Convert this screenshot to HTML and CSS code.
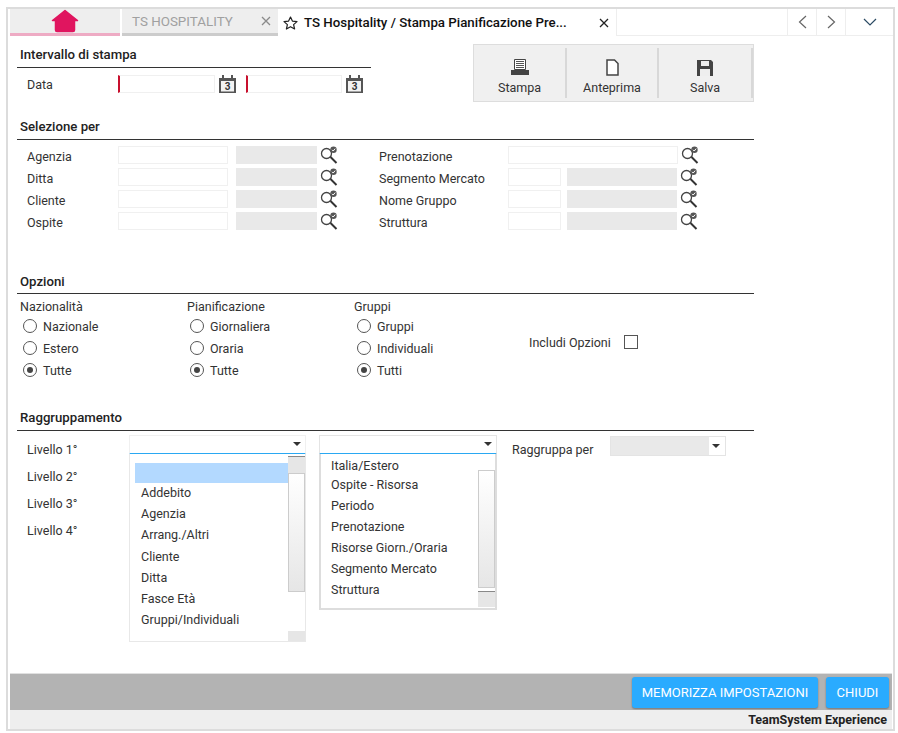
FILE: index.html
```html
<!DOCTYPE html>
<html>
<head>
    <title>TS Hospitality</title>
    <link rel="stylesheet" href="styles.css">
</head>
<body>
    <div class="window">
        <!-- tab bar -->
        <div class="tabbar">
            <div class="tab tab-home">
                <svg width="28" height="24" viewBox="0 0 28 24"><path fill="#e0155f" stroke="#e0155f" stroke-width="1.5" stroke-linejoin="round" d="M14 1.5 L26.5 11.5 H23.5 V21 Q23.5 22.5 22 22.5 H6 Q4.5 22.5 4.500 21 V11.500 H1.500 Z"/></svg>
            </div>
            <div class="tab tab-app">
                <span class="tab-app-title">TS HOSPITALITY</span>
                <svg class="tab-close" width="10" height="10" viewBox="0 0 10 10"><path stroke="#8a8a8a" stroke-width="1.300" d="M1 1 L9 9 M9 1 L1 9"/></svg>
            </div>
            <div class="tab tab-active">
                <svg class="tab-star" width="15" height="14" viewBox="0 0 15 14"><path fill="none" stroke="#222" stroke-width="1.200" stroke-linejoin="round" d="M7.500 1 L9.400 5.100 L14 5.600 L10.600 8.600 L11.600 13 L7.500 10.700 L3.400 13 L4.400 8.600 L1 5.600 L5.600 5.100 Z"/></svg>
                <span class="tab-active-title">TS Hospitality / Stampa Pianificazione Pre...</span>
                <svg class="tab-close" width="10" height="10" viewBox="0 0 10 10"><path stroke="#222" stroke-width="1.300" d="M1 1 L9 9 M9 1 L1 9"/></svg>
            </div>
            <div class="tab-spacer"></div>
            <div class="tab-nav">
                <svg width="9" height="14" viewBox="0 0 9 14"><path fill="none" stroke="#666" stroke-width="1.200" d="M8 1 L1.500 7 L8 13"/></svg>
            </div>
            <div class="tab-nav">
                <svg width="9" height="14" viewBox="0 0 9 14"><path fill="none" stroke="#666" stroke-width="1.200" d="M1 1 L7.500 7 L1 13"/></svg>
            </div>
            <div class="tab-nav tab-nav-wide">
                <svg width="14" height="8" viewBox="0 0 14 8"><path fill="none" stroke="#2b4a63" stroke-width="1.200" d="M1 1 L7 7 L13 1"/></svg>
            </div>
        </div>

        <div class="main">
            <!-- print range + toolbar -->
            <div class="top-row">
                <div class="range">
                    <div class="section-title">Intervallo di stampa</div>
                    <div class="range-row">
                        <span class="field-label">Data</span>
                        <input class="input input-date" type="text">
                        <svg class="cal" width="17" height="18" viewBox="0 0 17 18"><path fill="#555" d="M0 3 H3 V0 H5 V3 H12 V0 H14 V3 H17 V18 H0 Z"/><rect x="2" y="6" width="13" height="10.500" fill="#f2f2f2"/><text x="8.500" y="15" text-anchor="middle" class="cal-num">3</text></svg>
                        <input class="input input-date input-date2" type="text">
                        <svg class="cal" width="17" height="18" viewBox="0 0 17 18"><path fill="#555" d="M0 3 H3 V0 H5 V3 H12 V0 H14 V3 H17 V18 H0 Z"/><rect x="2" y="6" width="13" height="10.500" fill="#f2f2f2"/><text x="8.500" y="15" text-anchor="middle" class="cal-num">3</text></svg>
                    </div>
                </div>
                <div class="toolbar">
                    <div class="tool">
                        <svg width="18" height="17" viewBox="0 0 18 17"><path fill="#fff" stroke="#444" d="M3.500 .5 H14.500 V10.500 H3.500 Z"/><path stroke="#555" d="M5 2.500 H13 M5 4.500 H13 M5 6.500 H13 M5 8.500 H13"/><path fill="#444" d="M0 11 H18 V16 H0 Z"/></svg>
                        <span>Stampa</span>
                    </div>
                    <div class="tool">
                        <svg width="13" height="17" viewBox="0 0 13 17"><path fill="#fff" stroke="#444" stroke-width="1.500" d="M1 1 H8.500 L12 4.500 V16 H1 Z"/></svg>
                        <span>Anteprima</span>
                    </div>
                    <div class="tool">
                        <svg width="16" height="16" viewBox="0 0 16 16"><path fill="#444" d="M0 0 H14 L16 2 V16 H0 Z"/><rect x="4" y="1" width="8" height="5" fill="#eee"/><rect x="3" y="9" width="10" height="7" fill="#eee"/></svg>
                        <span>Salva</span>
                    </div>
                </div>
            </div>

            <!-- selection -->
            <div class="section section-sel">
                <div class="section-title">Selezione per</div>
                <div class="sel-grid">
                    <div class="field">
                        <span class="field-label">Agenzia</span>
                        <input class="input input-code" type="text">
                        <span class="readonly readonly-left"></span>
                        <svg class="lens" width="18" height="18" viewBox="0 0 18 18"><use href="#lens"/></svg>
                    </div>
                    <div class="field">
                        <span class="field-label field-label-right">Prenotazione</span>
                        <input class="input input-long" type="text">
                        <svg class="lens" width="18" height="18" viewBox="0 0 18 18"><use href="#lens"/></svg>
                    </div>
                    <div class="field">
                        <span class="field-label">Ditta</span>
                        <input class="input input-code" type="text">
                        <span class="readonly readonly-left"></span>
                        <svg class="lens" width="18" height="18" viewBox="0 0 18 18"><use href="#lens"/></svg>
                    </div>
                    <div class="field">
                        <span class="field-label field-label-right">Segmento Mercato</span>
                        <input class="input input-short" type="text">
                        <span class="readonly readonly-right"></span>
                        <svg class="lens" width="18" height="18" viewBox="0 0 18 18"><use href="#lens"/></svg>
                    </div>
                    <div class="field">
                        <span class="field-label">Cliente</span>
                        <input class="input input-code" type="text">
                        <span class="readonly readonly-left"></span>
                        <svg class="lens" width="18" height="18" viewBox="0 0 18 18"><use href="#lens"/></svg>
                    </div>
                    <div class="field">
                        <span class="field-label field-label-right">Nome Gruppo</span>
                        <input class="input input-short" type="text">
                        <span class="readonly readonly-right"></span>
                        <svg class="lens" width="18" height="18" viewBox="0 0 18 18"><use href="#lens"/></svg>
                    </div>
                    <div class="field">
                        <span class="field-label">Ospite</span>
                        <input class="input input-code" type="text">
                        <span class="readonly readonly-left"></span>
                        <svg class="lens" width="18" height="18" viewBox="0 0 18 18"><use href="#lens"/></svg>
                    </div>
                    <div class="field">
                        <span class="field-label field-label-right">Struttura</span>
                        <input class="input input-short" type="text">
                        <span class="readonly readonly-right"></span>
                        <svg class="lens" width="18" height="18" viewBox="0 0 18 18"><use href="#lens"/></svg>
                    </div>
                </div>
            </div>

            <!-- options -->
            <div class="section section-opt">
                <div class="section-title">Opzioni</div>
                <div class="opt-row">
                    <div class="opt-group">
                        <div class="opt-title">Nazionalità</div>
                        <div class="radio"><i class="dot"></i>Nazionale</div>
                        <div class="radio"><i class="dot"></i>Estero</div>
                        <div class="radio radio-on"><i class="dot"></i>Tutte</div>
                    </div>
                    <div class="opt-group">
                        <div class="opt-title">Pianificazione</div>
                        <div class="radio"><i class="dot"></i>Giornaliera</div>
                        <div class="radio"><i class="dot"></i>Oraria</div>
                        <div class="radio radio-on"><i class="dot"></i>Tutte</div>
                    </div>
                    <div class="opt-group opt-group-last">
                        <div class="opt-title">Gruppi</div>
                        <div class="radio"><i class="dot"></i>Gruppi</div>
                        <div class="radio"><i class="dot"></i>Individuali</div>
                        <div class="radio radio-on"><i class="dot"></i>Tutti</div>
                    </div>
                    <div class="opt-extra">
                        <span>Includi Opzioni</span>
                        <i class="checkbox"></i>
                    </div>
                </div>
            </div>

            <!-- grouping -->
            <div class="section section-group">
                <div class="section-title">Raggruppamento</div>
                <div class="group-row">
                    <div class="levels">
                        <div>Livello 1°</div>
                        <div>Livello 2°</div>
                        <div>Livello 3°</div>
                        <div>Livello 4°</div>
                    </div>

                    <div class="combo combo-first">
                        <i class="caret"></i>
                        <div class="list list-first">
                            <div class="list-items">
                                <div class="list-item list-item-sel"></div>
                                <div class="list-item">Addebito</div>
                                <div class="list-item">Agenzia</div>
                                <div class="list-item">Arrang./Altri</div>
                                <div class="list-item">Cliente</div>
                                <div class="list-item">Ditta</div>
                                <div class="list-item">Fasce Età</div>
                                <div class="list-item">Gruppi/Individuali</div>
                            </div>
                            <div class="scroll">
                                <div class="scroll-btn scroll-btn-top"></div>
                                <div class="scroll-thumb scroll-thumb-first"></div>
                                <div class="scroll-gap"></div>
                                <div class="scroll-btn scroll-btn-end"></div>
                            </div>
                        </div>
                    </div>

                    <div class="combo combo-second">
                        <i class="caret"></i>
                        <div class="list list-second">
                            <div class="list-items">
                                <div class="list-item list-item-tight">Italia/Estero</div>
                                <div class="list-item">Ospite - Risorsa</div>
                                <div class="list-item">Periodo</div>
                                <div class="list-item">Prenotazione</div>
                                <div class="list-item">Risorse Giorn./Oraria</div>
                                <div class="list-item">Segmento Mercato</div>
                                <div class="list-item">Struttura</div>
                            </div>
                            <div class="scroll scroll-second">
                                <div class="scroll-thumb scroll-thumb-second"></div>
                                <div class="scroll-btn scroll-btn-second"></div>
                            </div>
                        </div>
                    </div>

                    <span class="group-label">Raggruppa per</span>
                    <div class="combo combo-third">
                        <span class="combo-fill"></span>
                        <i class="caret"></i>
                    </div>
                </div>
            </div>
        </div>

        <!-- footer -->
        <div class="actions">
            <button class="action action-save">MEMORIZZA IMPOSTAZIONI</button>
            <button class="action action-close">CHIUDI</button>
        </div>
        <div class="statusbar">TeamSystem Experience</div>
    </div>

    <!-- shared lens icon -->
    <svg class="defs" width="0" height="0">
        <symbol id="lens" viewBox="0 0 18 18">
            <circle cx="6.500" cy="7.500" r="5" fill="none" stroke="#444" stroke-width="1.300"/>
            <path stroke="#333" stroke-width="2" d="M10.500 11 L16.500 17"/>
            <circle cx="13.500" cy="3.800" r="3.200" fill="#555"/>
            <path fill="none" stroke="#fff" d="M12 3.800 L13.200 5 L15.200 2.600"/>
        </symbol>
    </svg>
</body>
</html>
```

FILE: styles.css
```css
* {
    box-sizing: border-box;
}

body {
    margin: 0;
    padding: 7px 3px 0 6px;
    font-family: Roboto, "Liberation Sans", sans-serif;
    font-size: 12.500px;
    color: #333;
    background-color: white;
}

/* Outer window frame */
.window {
    display: flex;
    flex-direction: column;
    width: 889px;
    height: 724px;
    border: 2px solid #dcdcdc;
}

/* Tab bar */
.tabbar {
    display: flex;
    height: 27px;
    padding-left: 2px;
}

.tab {
    display: flex;
    align-items: center;
    height: 27px;
}

.tab-home {
    justify-content: center;
    width: 110px;
    background-color: #eee;
    border-bottom: 3px solid #eeabc4;
    margin-right: 2px;
}

.tab-home svg {
    margin-top: -1px;
}

.tab-app {
    width: 156px;
    padding-left: 10px;
    background-color: #eee;
    border-bottom: 3px solid #ccc;
    color: #a0a0a0;
    font-size: 13.400px;
}

.tab-app-title {
    flex: 1;
}

.tab-app .tab-close {
    margin-right: 7px;
}

.tab-active {
    width: 338px;
    padding-left: 5px;
    font-size: 13.300px;
    font-weight: 500;
    color: #111;
}

.tab-star {
    margin-right: 6px;
}

.tab-active-title {
    width: 295px;
    white-space: nowrap;
}

.tab-spacer {
    flex: 1;
    border-bottom: 1px solid #eee;
    border-left: 1px solid #eee;
}

.tab-nav {
    display: flex;
    align-items: center;
    justify-content: center;
    width: 29px;
    border-left: 1px solid #eee;
    border-bottom: 1px solid #eee;
}

.tab-nav-wide {
    width: 48px;
}

/* Main form */
.main {
    flex: 1;
    padding-left: 9px;
}

.top-row {
    display: flex;
    height: 66px;
}

.range {
    width: 354px;
    padding-top: 11px;
}

.section-title {
    padding-left: 3px;
    padding-bottom: 4px;
    line-height: 16px;
    font-size: 13.200px;
    font-weight: 500;
    color: #222;
    border-bottom: 1px solid #333;
}

.section-opt .section-title {
    padding-bottom: 3px;
}

.range-row {
    display: flex;
    align-items: center;
    margin-top: 7px;
}

.field-label {
    width: 101px;
    padding-left: 10px;
    flex-shrink: 0;
}

.field .field-label {
    padding-top: 2px;
}

.input {
    height: 18px;
    padding: 0;
    background-color: white;
    border: 1px solid #f0f0f0;
    border-radius: 0;
}

.input-date {
    width: 97px;
    border-left: 2px solid #c8102e;
}

.input-date2 {
    width: 96px;
    margin-left: 10px;
}

.cal {
    margin-left: 4px;
}

.cal-num {
    font-size: 10px;
    font-weight: 700;
    fill: #333;
}

/* Print / preview / save box */
.toolbar {
    display: grid;
    grid-template-columns: 93px 92px 94px;
    width: 281px;
    height: 58px;
    margin-top: 8px;
    margin-left: 102px;
    padding: 3px 0;
    background-color: #f0f0f0;
    border: 1px solid #ddd;
}

.tool {
    display: flex;
    flex-direction: column;
    align-items: center;
    justify-content: flex-end;
    gap: 5px;
    padding-bottom: 3px;
    border-right: 2px solid #d8d8d8;
}

.tool span {
    line-height: 14px;
    color: #333;
}

/* Selection block */
.section-sel {
    margin-top: 17px;
    width: 737px;
}

.sel-grid {
    display: grid;
    grid-template-columns: 362px 1fr;
    row-gap: 4px;
    margin-top: 6px;
}

.field {
    display: flex;
    align-items: center;
    height: 18px;
}

.field .field-label-right {
    width: 129px;
    padding-left: 0;
}

.input-code {
    width: 110px;
}

.input-long {
    width: 170px;
}

.input-short {
    width: 53px;
}

.readonly {
    height: 18px;
    background-color: #e9e9e9;
}

.readonly-left {
    width: 81px;
    margin-left: 8px;
}

.readonly-right {
    width: 110px;
    margin-left: 6px;
}

.lens {
    margin-left: 3px;
}

.defs {
    position: absolute;
}

/* Options block */
.section-opt {
    margin-top: 44px;
    width: 737px;
}

.opt-row {
    display: flex;
    padding-left: 3px;
    margin-top: 5px;
}

.opt-group {
    width: 167px;
}

.opt-group-last {
    width: 175px;
}

.opt-title {
    line-height: 16px;
}

.radio {
    display: flex;
    align-items: center;
    height: 22px;
    padding-left: 3px;
}

.dot {
    position: relative;
    width: 14px;
    height: 14px;
    margin-right: 6px;
    background-color: white;
    border: 1px solid #555;
    border-radius: 50%;
}

.radio-on .dot::after {
    content: "";
    position: absolute;
    top: 3px;
    left: 3px;
    width: 6px;
    height: 6px;
    background-color: #444;
    border-radius: 50%;
}

.opt-extra {
    display: flex;
    align-items: center;
    gap: 13px;
    height: 14px;
    margin-top: 36px;
}

.checkbox {
    width: 14px;
    height: 14px;
    background-color: white;
    border: 1px solid #555;
}

/* Grouping block */
.section-group {
    margin-top: 29px;
    width: 737px;
}

.group-row {
    display: flex;
    align-items: flex-start;
    margin-top: 4px;
}

.levels {
    width: 112px;
    padding-left: 10px;
    padding-top: 7px;
}

.levels div {
    height: 27px;
    line-height: 16px;
}

.combo {
    position: relative;
    height: 20px;
    background-color: white;
    border: 1px solid #f0f0f0;
}

.combo-first {
    width: 177px;
    border-bottom: 2px solid #2aa8f2;
}

.combo-second {
    width: 178px;
    margin-left: 13px;
    border-bottom: 2px solid #2aa8f2;
    border-color: #e4e4e4 #e4e4e4 #2aa8f2;
}

.combo-third {
    display: flex;
    width: 116px;
    margin-top: 1px;
    border-color: #e4e4e4;
}

.combo-fill {
    width: 98px;
    background-color: #e9e9e9;
}

.caret {
    position: absolute;
    top: 6px;
    right: 4px;
    width: 0;
    height: 0;
    border-top: 4px solid #333;
    border-left: 4px solid transparent;
    border-right: 4px solid transparent;
}

.combo-third .caret {
    top: 7px;
    right: 5px;
}

.group-label {
    margin-left: 15px;
    width: 98px;
    line-height: 16px;
    padding-top: 7px;
}

/* Dropdown lists open over the form */
.list {
    position: absolute;
    display: flex;
    top: 18px;
    left: -1px;
    right: -1px;
    background-color: white;
    border: 1px solid #e8e8e8;
    border-top: 0;
}

.list-first {
    height: 188px;
}

.list-second {
    height: 156px;
    border: 2px solid #ddd;
    border-top: 0;
}

.list-items {
    flex: 1;
    padding: 9px 0 0 5px;
}

.list-second .list-items {
    padding: 4px 0 0 10px;
}

.list-item {
    height: 21.200px;
    line-height: 21px;
    padding-left: 6px;
}

.list-second .list-item {
    height: 21px;
    padding-left: 0;
}

.list-item-sel {
    height: 20px;
    margin-bottom: -1px;
    background-color: #b3d9ff;
}

.list-second .list-item-tight {
    height: 15px;
    line-height: 15px;
    margin-bottom: 1px;
}

.scroll {
    display: flex;
    flex-direction: column;
    width: 17px;
    padding-top: 2px;
}

.scroll-second {
    padding-top: 16px;
}

.scroll-btn {
    background-color: #e6e6e6;
}

.scroll-btn-top {
    height: 17px;
    border-top: 1px solid #888;
}

.scroll-thumb {
    background: linear-gradient(#fff, #e6e6e6);
    border: 1px solid #ccc;
}

.scroll-thumb-first {
    height: 119px;
}

.scroll-gap {
    flex: 1;
}

.scroll-btn-end {
    height: 10px;
}

.scroll-thumb-second {
    height: 118px;
}

.scroll-btn-second {
    height: 16px;
    margin-top: 3px;
    border-top: 1px solid #888;
}

/* Footer */
.actions {
    display: flex;
    justify-content: flex-end;
    gap: 8px;
    flex-shrink: 0;
    height: 37px;
    margin-left: 2px;
    margin-right: 1px;
    padding: 3px 3px 0 0;
    background-color: #b3b3b3;
    border-top: 1px solid #e0e0e0;
}

.action {
    height: 31px;
    padding: 0;
    font-family: Roboto, "Liberation Sans", sans-serif;
    font-size: 13px;
    color: white;
    background-color: #2aabff;
    border: 0;
    border-radius: 3px;
    box-shadow: 0 1px 2px rgba(0, 0, 0, 0.35);
}

.action-save {
    width: 186px;
}

.action-close {
    width: 63px;
}

.statusbar {
    flex-shrink: 0;
    height: 19px;
    margin: 0 1px 0 2px;
    padding-right: 5px;
    line-height: 20px;
    text-align: right;
    font-weight: 700;
    color: #222;
    background-color: #eee;
}
```
